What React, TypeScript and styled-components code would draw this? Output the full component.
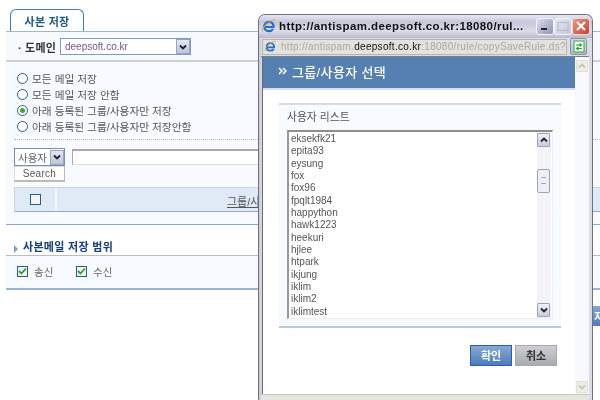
import React from 'react';
import styled, { createGlobalStyle } from 'styled-components';

const Global = createGlobalStyle`
  html, body { margin: 0; padding: 0; background: #fff; }
  * { box-sizing: border-box; }
`;
const KR = `"Liberation Sans", "Noto Sans CJK KR", sans-serif`;

const Page = styled.div`
  position: relative; width: 600px; height: 400px; overflow: hidden;
  background: #fff; padding-left: 6px; display: flex; flex-direction: column;
  font-family: ${KR}; font-size: 11px; color: #666; filter: blur(0.3px);
`;
const TabBar = styled.div`height: 31px; padding: 9px 0 0 4px; display: flex;`;
const Tab = styled.div`
  width: 74px; height: 22px; border: 1.5px solid #3f7fae; border-bottom: 0;
  border-radius: 6px 6px 0 0; background: #fff; color: #1f5a85; font-weight: 700;
  font-size: 11px; display: flex; align-items: center; justify-content: center;
  padding-top: 1px; letter-spacing: .3px;
`;
const DomainRow = styled.div`
  height: 31px; border-top: 1px solid #9db9cd; border-bottom: 2px solid #cfcfcf;
  background: #f6fafd; display: flex; align-items: center; padding: 1px 0 0 12px; color: #333;
`;
const DomainLabel = styled.span`width: 42px; font-weight: 700; font-size: 11px; letter-spacing: .2px;`;
const SelectBox = styled.div<{ $w: number }>`
  width: ${p => p.$w}px; height: 17px; border: 1px solid #7f9db9; background: #fff;
  display: flex; align-items: center; justify-content: space-between; padding-left: 4px;
  font-size: 10px; color: #75568a; 
`;
const ArrowBtn = styled.span`
  width: 14px; height: 15px; background: linear-gradient(#e6e6f2, #bfc4dc); border: 1px solid #9aa3c2;
  display: flex; align-items: center; justify-content: center;
`;
const Options = styled.div`
  height: 163px; background: #f7faff; border-bottom: 1px solid #8ea6cb; padding: 8px 0 0 8px;
`;
const RadioRow = styled.div`
  height: 16px; display: flex; align-items: center; gap: 4px; padding-left: 3px;
  font-size: 10.7px; color: #555;
`;
const Radio = styled.span<{ $on?: boolean }>`
  width: 11px; height: 11px; border-radius: 50%; border: 1px solid #2f5f8c; background: #fff;
  display: flex; align-items: center; justify-content: center; flex: none;
  &::after { content: ''; width: 5px; height: 5px; border-radius: 50%; background: ${p => (p.$on ? '#3fa63f' : 'transparent')}; }
`;
const Dotted = styled.div`margin: 5px 0 8px; border-top: 1px dotted #bbb; width: 600px;`;
const SearchRow = styled.div`display: flex; gap: 7px; align-items: flex-start; height: 18px;`;
const TextInput = styled.div`
  width: 260px; height: 16px; background: #fff; border: 1px solid #ddd; border-top: 2px solid #a8a8a8; border-left-color: #a8a8a8; margin-top: 1px;
`;
const UserSelect = styled(SelectBox)`height: 18px; font-size: 10.5px; color: #666; padding-left: 3px; border-color: #6f92b5;`;
const SearchBtn = styled.div`
  width: 51px; height: 16px; background: #fff; border: 1px solid #ddd; border-bottom: 2px solid #bbb; border-right-color: #bbb;
  font-size: 10px; color: #555; display: flex; align-items: center; justify-content: center;
  letter-spacing: .3px;
`;
const HeaderRow = styled.div`
  margin-top: 5px; height: 25px; width: 600px; border: 1px solid #d4d4d8; border-bottom: 1px solid #92a9c7;
  display: flex; background: #dfeaf6;
`;
const CheckCell = styled.div`
  width: 42px; border-right: 2px solid #f3f7fb; display: flex; align-items: center; justify-content: center;
`;
const Blank = styled.span`width: 11px; height: 11px; border: 1px solid #2d5a88; background: #f4f4f0;`;
const NameCell = styled.div`
  flex: none; padding: 5px 0 0 170px; color: #555; text-decoration: underline; font-size: 11px;
`;
const SectionTitle = styled.div`
  height: 31px; border-bottom: 1px solid #bdbdbd; display: flex; align-items: flex-end; gap: 5px;
  padding: 0 0 1px 8px; color: #143f78; font-weight: 700; font-size: 11px; letter-spacing: .3px;
`;
const Tri = styled.span`
  width: 0; height: 0; border-left: 4px solid #7fa0c8; border-top: 4px solid transparent; border-bottom: 4px solid transparent;
  margin-bottom: 1px;
`;
const Checks = styled.div`
  height: 34px; background: #f7faff; border-bottom: 2px solid #9db3d6; display: flex; align-items: center; padding: 0 0 2px 11px;
`;
const CheckItem = styled.div`
  width: 59px; display: flex; align-items: center; gap: 6px; color: #666; font-size: 10.5px;
`;
const CheckBox = styled.span`
  width: 11px; height: 11px; border: 1px solid #2d5a88; background: #f4f4f0; display: flex; align-items: center; justify-content: center;
`;
const Footer = styled.div`padding: 16px 0 0 582px;`;
const SaveBtn = styled.div`
  width: 60px; height: 20px; background: linear-gradient(#88a6d2, #4d7cb8); color: #fff; font-size: 11px; font-weight: 700; padding: 2px 0 0 6px;
`;

/* popup window */
const Popup = styled.div`
  position: absolute; left: 258px; top: 14px; width: 335px; height: 392px;
  border-radius: 7px 7px 0 0; border: 1px solid #6f6f88; border-bottom: 0;
  background: linear-gradient(90deg, #c8c8d8, #dcdce6 3px); padding: 0 3px 0 2px;
  display: flex; flex-direction: column;
`;
const TitleBar = styled.div`
  height: 23px; display: flex; align-items: center; gap: 2px; padding: 0 0 0 2px;
  background: linear-gradient(#e8e8f2, #c6c6da 30%, #dcdce8 70%, #b8b8cc);
  margin: 0 -3px 0 -2px; border-radius: 6px 6px 0 0;
`;
const TitleText = styled.div`
  flex: none; width: 254px; color: #111; font-weight: 700; font-size: 11.5px; letter-spacing: .4px; white-space: nowrap;
  font-family: "Liberation Sans", sans-serif;
`;
const WinBtns = styled.div`display: flex; margin-left: 1px;`;
const WinBtn = styled.span<{ $kind: 'min' | 'max' | 'close' }>`
  width: 18px; height: 17px; border-radius: 3px; border: 1px solid ${p => (p.$kind === 'close' ? '#f0d8d0' : '#f4f4fa')};
  background: ${p => p.$kind === 'close' ? 'linear-gradient(135deg,#e89a88,#c8402c)' : p.$kind === 'max' ? 'linear-gradient(135deg,#e8e8f2,#c4c8dc)' : 'linear-gradient(135deg,#dcdcec,#8e94b8)'};
  display: flex; align-items: center; justify-content: center;
`;
const AddressBar = styled.div`
  height: 19px; display: flex; align-items: center; gap: 3px; padding-left: 1px; background: #dcdce4;
  border-bottom: 1px solid #807e78;
`;
const AddressField = styled.div`
  width: 305px; height: 16px; background: #e4e2dc; border: 1px solid #b4b4bc; display: flex; align-items: center; gap: 4px; padding-left: 1px;
  font-family: "Liberation Sans", sans-serif; font-size: 10px; color: #a8a8a4; white-space: nowrap; letter-spacing: .3px;
`;
const Host = styled.span`color: #111;`;
const GoBtn = styled.span`
  width: 17px; height: 17px; border: 1px solid #8a92a8; background: linear-gradient(#d6dae6,#b4bccc); border-radius: 2px;
  display: flex; align-items: center; justify-content: center;
`;
const Client = styled.div`
  height: 339px; background: #fff; display: flex; border-left: 1px solid #6a6a6a; margin-left: 1px;
`;
const Content = styled.div`width: 314px; display: flex; flex-direction: column;`;
const PopHeader = styled.div`
  height: 33px; background: #5680b1; border-bottom: 2px solid #d5dfee; color: #fff; font-size: 13px; font-weight: 500;
  display: flex; align-items: center; padding: 0 0 2px 15px; gap: 5px; letter-spacing: .35px;
`;
const ListPanel = styled.div`
  margin: 13px 0 0 16px; width: 282px; height: 225px; background: #f7faff; border-top: 2px solid #dcdcdc; border-bottom: 2px solid #b9c9e0;
  padding: 3px 0 0 8px;
`;
const PanelLabel = styled.div`font-size: 10.8px; color: #555; height: 22px;`;
const ListBox = styled.div`
  width: 266px; height: 189px; background: #fff; border: 1px solid #eceef2; border-top: 2px solid #8f8f89; border-left: 2px solid #9a9a94; display: flex; justify-content: space-between;
`;
const Items = styled.div`padding: 1px 0 0 2px; overflow: hidden;`;
const Item = styled.div`height: 12.36px; line-height: 12.36px; font-size: 10px; color: #555;`;
const ListScroll = styled.div`
  width: 14px; margin-right: 1px; background: #f4f4f8; display: flex; flex-direction: column; justify-content: space-between; padding: 1px 0;
  position: relative;
`;
const ScrollBtn = styled.span`
  width: 13px; height: 14px; border: 1px solid #9aa3c2; background: linear-gradient(#f0f0f8, #c8cce0); border-radius: 1px;
  display: flex; align-items: center; justify-content: center;
`;
const Thumb = styled.span`
  position: absolute; left: 0; top: 37px; width: 13px; height: 24px; border: 1px solid #9aa3c2; background: #eeeef6; border-radius: 2px;
  display: flex; align-items: center; justify-content: center;
  &::after { content: ''; width: 5px; height: 5px; border-top: 1px solid #aaa; border-bottom: 1px solid #aaa; }
`;
const Buttons = styled.div`display: flex; gap: 3px; padding: 17px 0 0 207px;`;
const DialogBtn = styled.div<{ $primary?: boolean }>`
  width: 42px; height: 21px; font-size: 11px; font-weight: 700; display: flex; align-items: center; justify-content: center;
  color: ${p => (p.$primary ? '#fff' : '#333')};
  border: 1px solid ${p => (p.$primary ? '#2a5cb0' : '#a8a8a8')};
  background: ${p => p.$primary ? 'linear-gradient(#8aa8d4,#4c7cbc)' : 'linear-gradient(#ccd0d4,#a8acb0)'};
`;
const PageScroll = styled.div`
  width: 14px; background: #f8f8ff; display: flex; flex-direction: column; justify-content: space-between; padding: 3px 0 1px 1px;
`;
const FadedBtn = styled.span`
  width: 12px; height: 12px; background: #eeeee6; border: 1px solid #e0e0d6; border-radius: 1px;
  display: flex; align-items: center; justify-content: center;
`;
const StatusBar = styled.div`height: 12px; background: #e6e5e0; border-top: 1px solid #c8c6bc;`;

const Chevron = ({ color = '#222', up = false }: { color?: string; up?: boolean }) => (
  <svg width="8" height="6" viewBox="0 0 8 6">
    <path d={up ? 'M1 4.5 L4 1.5 L7 4.5' : 'M1 1.5 L4 4.5 L7 1.5'} fill="none" stroke={color} strokeWidth="1.8" />
  </svg>
);
const Check = () => (
  <svg width="9" height="8" viewBox="0 0 9 8">
    <path d="M1 4 L3.5 6.5 L8 1.5" fill="none" stroke="#22a030" strokeWidth="1.8" />
  </svg>
);
const IEIcon = ({ size = 16 }: { size?: number }) => (
  <svg width={size} height={size} viewBox="0 0 16 16">
    <path d="M3.5 9 H12.5 C12.8 5.8 10.8 3.8 8 3.8 C5.2 3.8 3.2 6 3.2 8.6 C3.2 11.4 5.4 13.2 8 13.2 C9.8 13.2 11.2 12.4 12 11" fill="none" stroke="#1f70d0" strokeWidth="2.2" />
    <path d="M1.5 13.5 C0.5 10 8 2.5 14 1.5" fill="none" stroke="#e8a030" strokeWidth="1.1" />
  </svg>
);

const users = ['eksekfk21','epita93','eysung','fox','fox96','fpqlt1984','happython','hawk1223','heekuri','hjlee','htpark','ikjung','iklim','iklim2','iklimtest'];

export default function App() {
  return (
    <Page>
      <Global />
      <TabBar><Tab>사본 저장</Tab></TabBar>
      <DomainRow>
        <DomainLabel>· 도메인</DomainLabel>
        <SelectBox $w={131}>deepsoft.co.kr<ArrowBtn><Chevron /></ArrowBtn></SelectBox>
      </DomainRow>
      <Options>
        <RadioRow><Radio />모든 메일 저장</RadioRow>
        <RadioRow><Radio />모든 메일 저장 안함</RadioRow>
        <RadioRow><Radio $on />아래 등록된 그룹/사용자만 저장</RadioRow>
        <RadioRow><Radio />아래 등록된 그룹/사용자만 저장안함</RadioRow>
        <Dotted />
        <SearchRow>
          <UserSelect $w={51}>사용자<ArrowBtn><Chevron /></ArrowBtn></UserSelect>
          <TextInput />
        </SearchRow>
        <SearchBtn>Search</SearchBtn>
        <HeaderRow>
          <CheckCell><Blank /></CheckCell>
          <NameCell>그룹/사용자</NameCell>
        </HeaderRow>
      </Options>
      <SectionTitle><Tri />사본메일 저장 범위</SectionTitle>
      <Checks>
        <CheckItem><CheckBox><Check /></CheckBox>송신</CheckItem>
        <CheckItem><CheckBox><Check /></CheckBox>수신</CheckItem>
      </Checks>
      <Footer><SaveBtn>저장</SaveBtn></Footer>

      <Popup>
        <TitleBar>
          <IEIcon />
          <TitleText>http://antispam.deepsoft.co.kr:18080/rul...</TitleText>
          <WinBtns>
            <WinBtn $kind="min">
              <svg width="10" height="10" viewBox="0 0 10 10"><rect x="1" y="7" width="6" height="2" fill="#223" /></svg>
            </WinBtn>
            <WinBtn $kind="max">
              <svg width="12" height="11" viewBox="0 0 12 11"><rect x="1" y="1.5" width="10" height="8" fill="none" stroke="#b8bcd0" strokeWidth="1.2" /></svg>
            </WinBtn>
            <WinBtn $kind="close">
              <svg width="12" height="12" viewBox="0 0 12 12"><path d="M2 2 L10 10 M10 2 L2 10" stroke="#fff" strokeWidth="2.2" /></svg>
            </WinBtn>
          </WinBtns>
        </TitleBar>
        <AddressBar>
          <AddressField>
            <IEIcon size={13} />
            <span>http://antispam.<Host>deepsoft.co.kr</Host>:18080/rule/copySaveRule.ds?</span>
          </AddressField>
          <GoBtn>
            <svg width="12" height="13" viewBox="0 0 12 13">
              <rect x="1" y="1" width="10" height="11" fill="#f4fbf0" stroke="#40a050" />
              <path d="M3 5 H8 M6.5 3.5 L8.5 5 L6.5 6.5 M9 8.5 H4 M5.5 7 L3.5 8.5 L5.5 10" fill="none" stroke="#2fa040" strokeWidth="1.2" />
            </svg>
          </GoBtn>
        </AddressBar>
        <Client>
          <Content>
            <PopHeader>
              <svg width="9" height="8" viewBox="0 0 9 8"><path d="M1 1 L4 4 L1 7 M5 1 L8 4 L5 7" fill="none" stroke="#fff" strokeWidth="1.5" /></svg>
              그룹/사용자 선택
            </PopHeader>
            <ListPanel>
              <PanelLabel>사용자 리스트</PanelLabel>
              <ListBox>
                <Items>{users.map(u => <Item key={u}>{u}</Item>)}</Items>
                <ListScroll>
                  <ScrollBtn><Chevron up /></ScrollBtn>
                  <Thumb />
                  <ScrollBtn><Chevron /></ScrollBtn>
                </ListScroll>
              </ListBox>
            </ListPanel>
            <Buttons>
              <DialogBtn $primary>확인</DialogBtn>
              <DialogBtn>취소</DialogBtn>
            </Buttons>
          </Content>
          <PageScroll>
            <FadedBtn><Chevron color="#c8c8b8" up /></FadedBtn>
            <FadedBtn><Chevron color="#c8c8b8" /></FadedBtn>
          </PageScroll>
        </Client>
        <StatusBar />
      </Popup>
    </Page>
  );
}
